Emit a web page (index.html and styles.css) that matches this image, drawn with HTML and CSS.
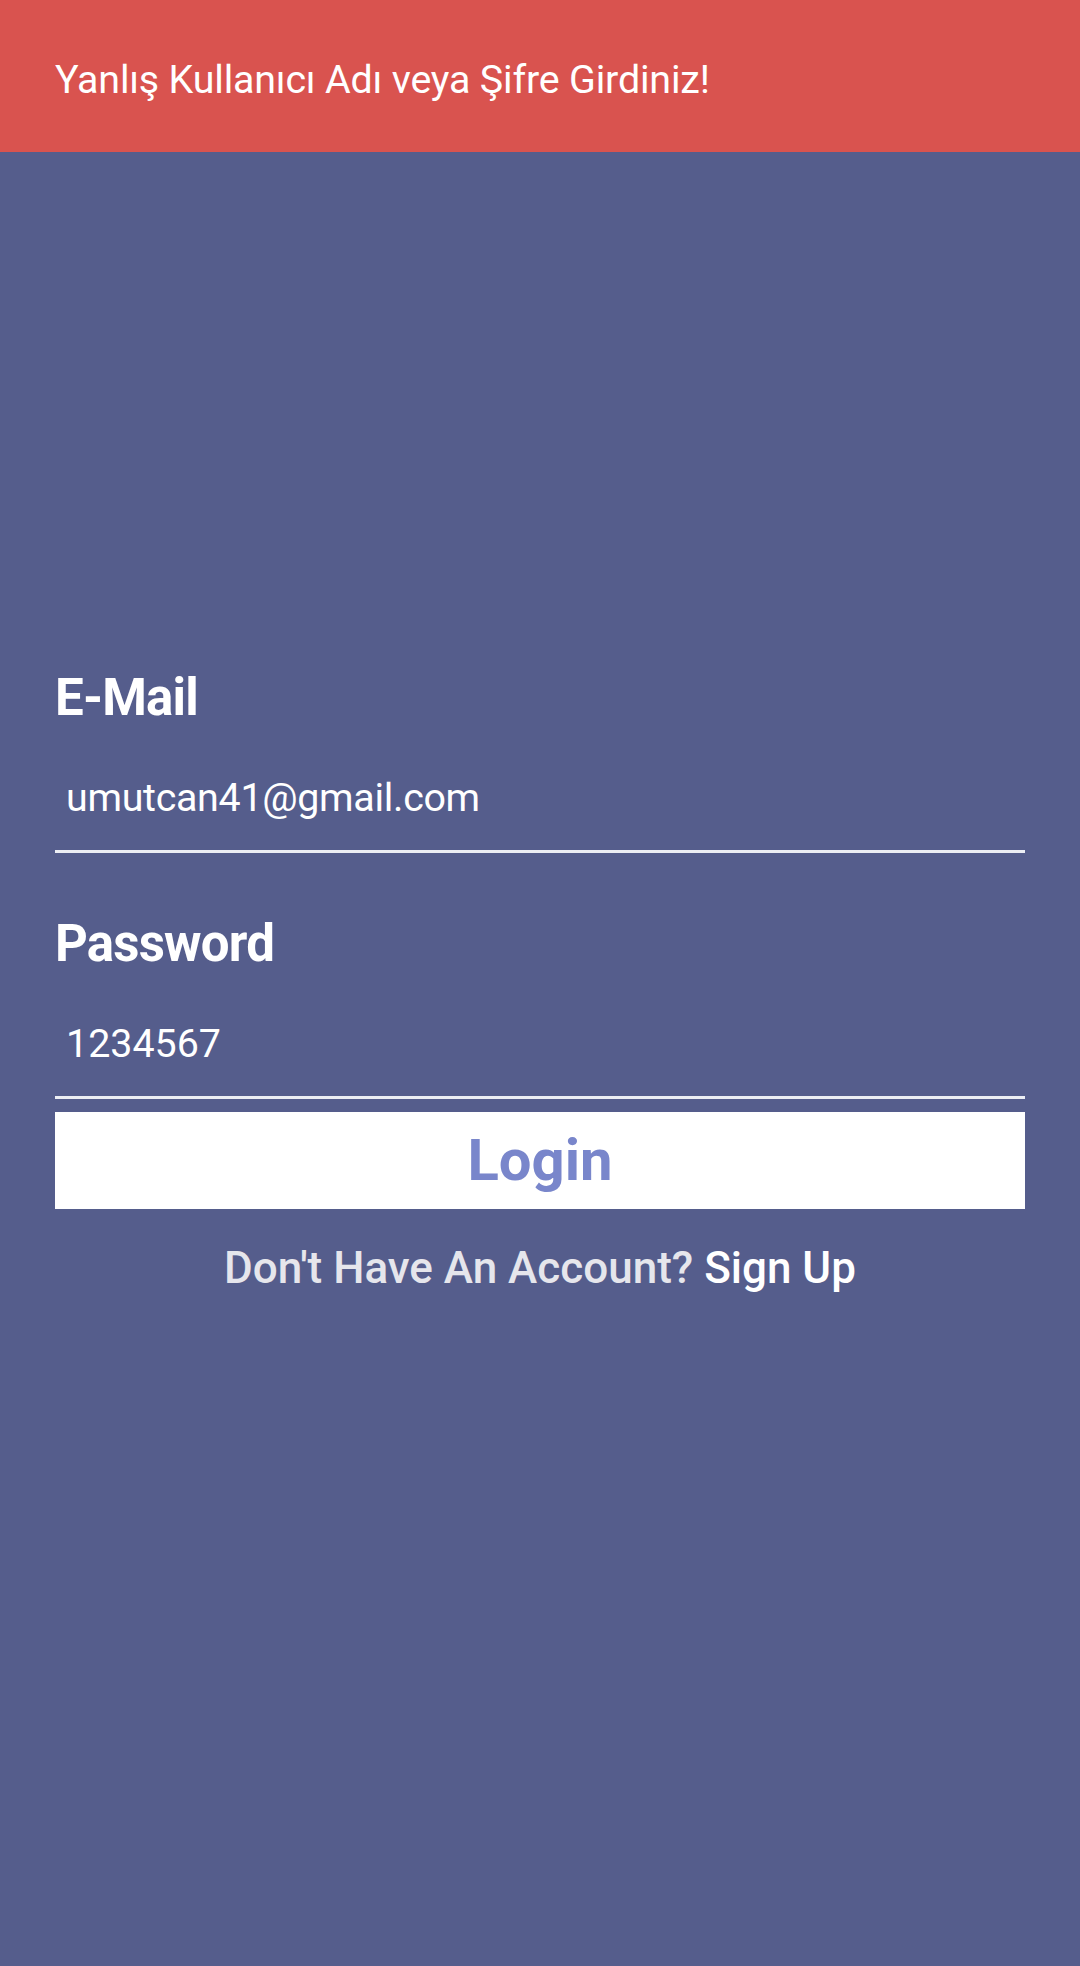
FILE: index.html
```html
<!DOCTYPE html>
<html lang="tr">
<head>
<meta charset="utf-8">
<title>Login</title>
<link rel="stylesheet" href="styles.css">
</head>
<body>
<div class="screen">
  <div class="banner">Yanlış Kullanıcı Adı veya Şifre Girdiniz!</div>
  <form class="form">
    <div class="field">
      <div class="label">E-Mail</div>
      <div class="input-value input-email">umutcan41@gmail.com</div>
    </div>
    <div class="field field-password">
      <div class="label">Password</div>
      <div class="input-value">1234567</div>
    </div>
    <div class="login-btn">Login</div>
    <div class="signup">Don't Have An Account? <span class="signup-link">Sign Up</span></div>
  </form>
</div>
</body>
</html>
```
FILE: styles.css
```css
html, body {
  margin: 0;
  padding: 0;
}
body {
  background: #555d8c;
  font-family: Roboto, "Liberation Sans", sans-serif;
}
.screen {
  width: 1080px;
  height: 1966px;
  background: #555d8c;
  display: flex;
  flex-direction: column;
}
.banner {
  box-sizing: border-box;
  height: 152px;
  background: #d9534f;
  color: #ffffff;
  font-size: 39.4px;
  letter-spacing: -0.18px;
  line-height: 46px;
  padding: 57px 55px 0;
}
.form {
  display: flex;
  flex-direction: column;
  padding: 516px 55px 0;
  margin: 0;
}
.label {
  color: #ffffff;
  font-size: 51px;
  font-weight: 700;
  letter-spacing: -0.8px;
  line-height: 60px;
}
.input-value {
  color: #ffffff;
  font-size: 39.4px;
  line-height: 46px;
  padding: 47px 11px 29px;
  border-bottom: 3px solid #eceef4;
}
.input-email {
  letter-spacing: -0.3px;
}
.field-password {
  margin-top: 61px;
}
.login-btn {
  margin-top: 13px;
  height: 97px;
  background: #ffffff;
  color: #7986cb;
  font-size: 58px;
  font-weight: 700;
  line-height: 97px;
  text-align: center;
}
.signup {
  margin-top: 33px;
  text-align: center;
  font-size: 44px;
  font-weight: 500;
  line-height: 52px;
  color: #e6e6ec;
}
.signup-link {
  color: #ffffff;
}
```
